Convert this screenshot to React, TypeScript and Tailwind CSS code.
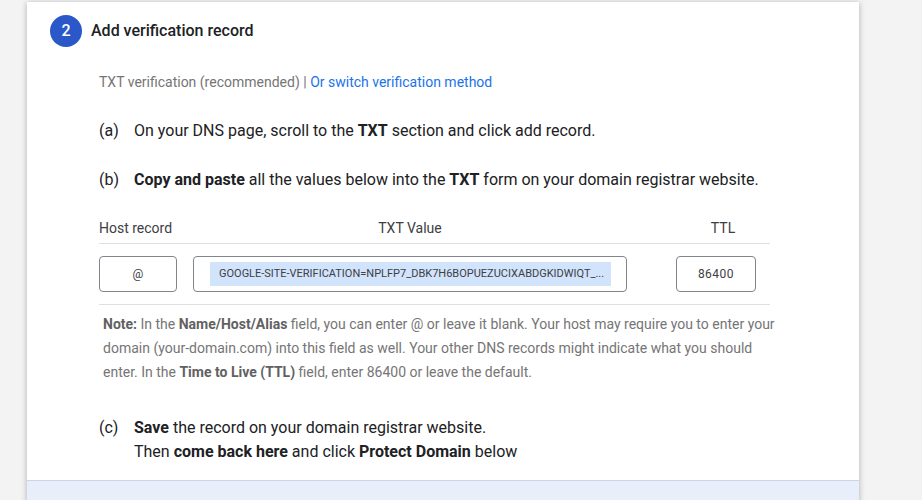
import React from "react";

const txtValue = "GOOGLE-SITE-VERIFICATION=NPLFP7_DBK7H6BOPUEZUCIXABDGKIDWIQT_...";

function Step({ label, children }: { label: string; children: React.ReactNode }) {
  return (
    <div className="flex text-[16px] leading-[24px] text-[#202124]">
      <span className="w-[35px] shrink-0">{label}</span>
      <div>{children}</div>
    </div>
  );
}

export default function App() {
  return (
    <div
      className="min-h-[500px] h-[500px] overflow-hidden bg-[#f3f3f3] pt-[2px]"
      style={{ fontFamily: "Roboto, 'Liberation Sans', sans-serif" }}
    >
      <div className="ml-[27px] w-[832px] bg-white shadow-[0_1px_6px_rgba(0,0,0,0.28)]">
        {/* step header */}
        <div className="flex items-center pl-[23px] pt-[13px]">
          <div className="w-[32px] h-[32px] rounded-full bg-[#2b58c8] text-white flex items-center justify-center text-[16px] font-medium">
            2
          </div>
          <h2 className="ml-[9px] text-[16px] font-medium text-[#202124]">Add verification record</h2>
        </div>

        <div className="pl-[72px]">
          <p className="mt-[25px] text-[14px] leading-[20px] text-[#757575]">
            TXT verification (recommended) | <span className="text-[#1a73e8]">Or switch verification method</span>
          </p>

          <div className="mt-[27px]">
            <Step label="(a)">
              On your DNS page, scroll to the <b className="font-bold">TXT</b> section and click add record.
            </Step>
          </div>
          <div className="mt-[25px]">
            <Step label="(b)">
              <b className="font-bold">Copy and paste</b> all the values below into the <b className="font-bold">TXT</b> form on your domain registrar website.
            </Step>
          </div>

          {/* record table */}
          <div className="mt-[26px] w-[671px]">
            <div className="flex text-[14px] leading-[20px] text-[#3c4043] pb-[5px] border-b border-[#e0e0e0]">
              <div className="w-[78px]">Host record</div>
              <div className="ml-[16px] w-[434px] text-center">TXT Value</div>
              <div className="ml-[49px] w-[94px] text-center">TTL</div>
            </div>
            <div className="flex pt-[12px] pb-[12px] border-b border-[#e0e0e0]">
              <div className="w-[78px] h-[36px] border border-[#80868b] rounded-[4px] flex items-center justify-center text-[12px] text-[#3c4043]">
                @
              </div>
              <div className="ml-[16px] w-[434px] h-[36px] border border-[#80868b] rounded-[4px] flex items-center pl-[16px]">
                <span className="w-[401px] h-[24px] bg-[#d2e3fc] pl-[9px] flex items-center text-[11px] text-[#3c4043] whitespace-nowrap overflow-hidden">
                  {txtValue}
                </span>
              </div>
              <div className="ml-[49px] w-[80px] h-[36px] border border-[#80868b] rounded-[4px] flex items-center justify-center text-[12px] text-[#3c4043] tracking-[0.5px]">
                86400
              </div>
            </div>
          </div>

          <p className="mt-[7px] pl-[4px] w-[680px] text-[14px] leading-[24px] text-[#757575]">
            <b className="font-bold text-[#616161]">Note:</b> In the <b className="font-bold text-[#616161]">Name/Host/Alias</b> field, you can enter @ or leave it blank. Your host may require you to enter your domain (your-domain.com) into this field as well. Your other DNS records might indicate what you should enter. In the <b className="font-bold text-[#616161]">Time to Live (TTL)</b> field, enter 86400 or leave the default.
          </p>

          <div className="mt-[32px] pb-[16px]">
            <Step label="(c)">
              <b className="font-bold">Save</b> the record on your domain registrar website.
              <br />
              Then <b className="font-bold">come back here</b> and click <b className="font-bold">Protect Domain</b> below
            </Step>
          </div>
        </div>

        <div className="h-[40px] bg-[#e8effb] border-t border-[#c9d5ea]" />
      </div>
    </div>
  );
}
